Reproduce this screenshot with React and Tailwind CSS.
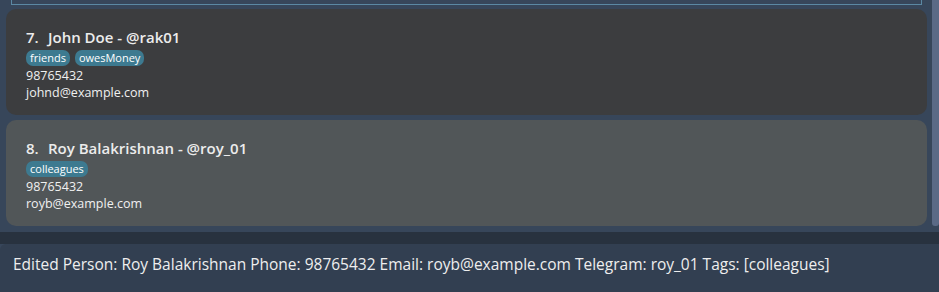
export default function App() {
  const font = { fontFamily: '"Open Sans", "Noto Sans", sans-serif' };
  const Tag = ({ children }) => (
    <span className="rounded-[7px] bg-[#3d7a90] px-[4px] h-[16px] leading-[16px] text-[11px] text-white">{children}</span>
  );
  const Card = ({ idx, name, tele, tags, phone, email, bg }) => (
    <div className={`h-[106px] rounded-[10px] ${bg} pl-[20px] pt-[18px]`}>
      <div className="flex items-baseline text-[15px] font-semibold text-[#ececec] leading-[20px]">
        <span className="w-[22px]">{idx}.</span>
        <span>{name} - @{tele}</span>
      </div>
      <div className="mt-[3px] flex gap-[5px]">{tags.map((t) => <Tag key={t}>{t}</Tag>)}</div>
      <div className="mt-[1px] text-[12.5px] leading-[17px] text-[#f0f0f0]">{phone}</div>
      <div className="text-[12.5px] leading-[17px] text-[#f0f0f0]">{email}</div>
    </div>
  );
  return (
    <div className="w-[939px] h-[292px] bg-[#37465a] overflow-hidden flex flex-col" style={font}>
      <div className="h-[232px] flex">
        <div className="flex-1 pl-[6px] pr-[5px] flex flex-col">
          <div className="ml-[5px] mr-[5px] h-[5px] border-x border-b border-[#5b88a3]" />
          <div className="mt-[4px] flex flex-col gap-[5px]">
            <Card idx="7" name="John Doe" tele="rak01" tags={["friends", "owesMoney"]} phone="98765432" email="johnd@example.com" bg="bg-[#3c3d3f]" />
            <Card idx="8" name="Roy Balakrishnan" tele="roy_01" tags={["colleagues"]} phone="98765432" email="royb@example.com" bg="bg-[#515658]" />
          </div>
        </div>
        <div className="w-[7px] h-[226px] bg-[#5b6a86] rounded-b-[3px]" />
      </div>
      <div className="h-[12px] bg-[#28323f]" />
      <div className="flex-1 bg-[#323f51] rounded-tl-[6px] pl-[13px] pt-[9px] text-[15.5px] text-[#eeeeee] leading-[22px]">
        Edited Person: Roy Balakrishnan Phone: 98765432 Email: royb@example.com Telegram: roy_01 Tags: [colleagues]
      </div>
    </div>
  );
}
